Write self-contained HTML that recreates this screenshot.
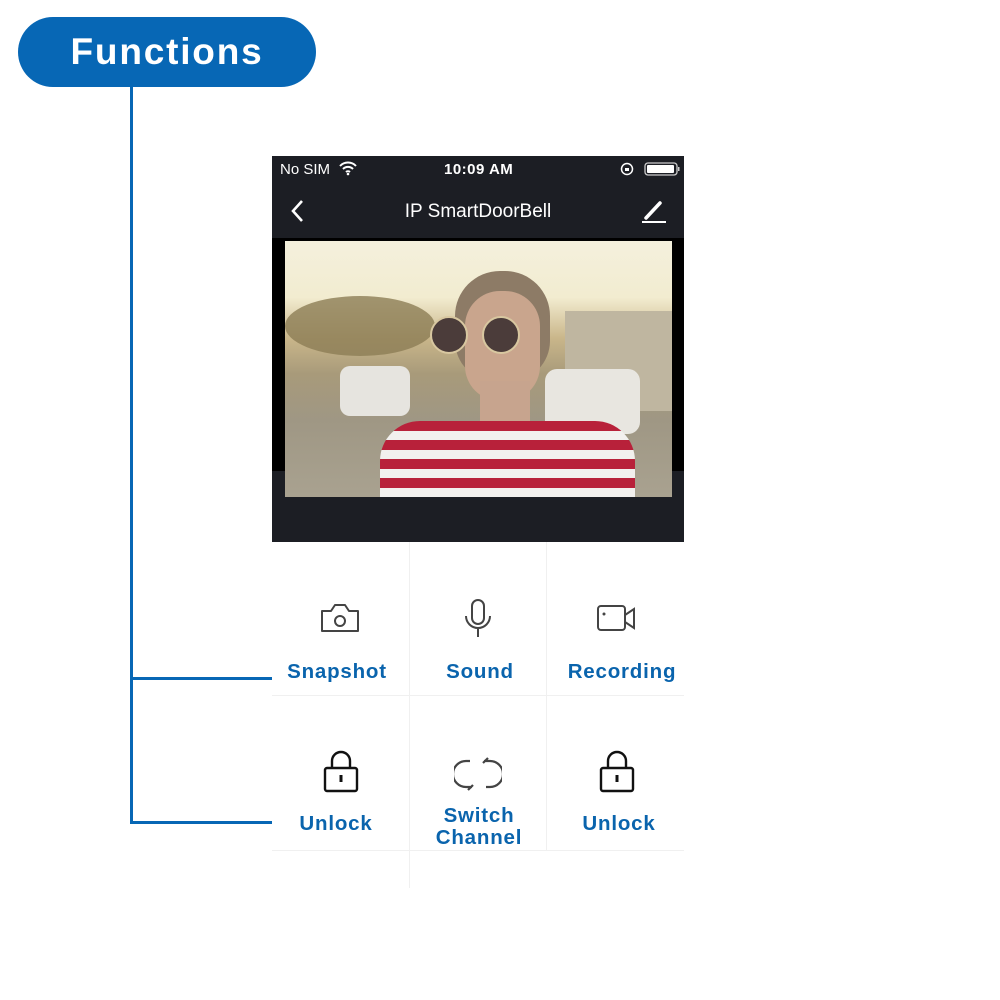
<!DOCTYPE html>
<html><head><meta charset="utf-8"><style>
*{margin:0;padding:0;box-sizing:border-box}
body{width:1000px;height:1000px;background:#fff;position:relative;overflow:hidden;font-family:"Liberation Sans",Arial,sans-serif}
.a{position:absolute}
.pill{left:18px;top:17px;width:298px;height:70px;border-radius:35px;background:#0767b5;color:#fff;font-weight:bold;font-size:37px;text-align:center;line-height:70px;letter-spacing:1.8px}
.ln{background:#0767b5}
.lbl{position:absolute;color:#0a64ad;font-weight:bold;font-size:20.5px;text-align:center;line-height:22px;letter-spacing:0.8px}
.vl{position:absolute;width:1px;background:#f0f0f0}
.hl{position:absolute;height:1px;background:#f0f0f0}
</style></head><body>
<div class="a pill">Functions</div>
<div class="a ln" style="left:130px;top:87px;width:3px;height:737px"></div>
<div class="a ln" style="left:130px;top:677px;width:142px;height:3px"></div>
<div class="a ln" style="left:130px;top:821px;width:142px;height:3px"></div>

<div class="a" style="left:272px;top:156px;width:412px;height:386px;background:#1c1e24"></div>
<div class="a" style="left:280px;top:161px;color:#fff;font-size:15px">No SIM</div>
<svg class="a" style="left:338px;top:160px" width="20" height="16" viewBox="0 0 20 16"><path d="M2 6a11 11 0 0 1 16 0M5 9a7 7 0 0 1 10 0M8 12a3 3 0 0 1 4 0" stroke="#fff" stroke-width="2" fill="none"/><circle cx="10" cy="14" r="1.3" fill="#fff"/></svg>
<div class="a" style="left:444px;top:161px;color:#fff;font-size:15px;font-weight:bold;letter-spacing:0.5px">10:09 AM</div>
<svg class="a" style="left:620px;top:161px" width="60" height="16" viewBox="0 0 60 16"><circle cx="7" cy="8" r="5.5" stroke="#fff" stroke-width="1.5" fill="none"/><rect x="5" y="7" width="4" height="3" fill="#fff"/><rect x="25" y="2" width="32" height="12" rx="3" stroke="#ccc" stroke-width="1.3" fill="none"/><rect x="27" y="4" width="27" height="8" rx="1" fill="#fff"/><rect x="58" y="6" width="1.5" height="4" fill="#ccc"/></svg>
<svg class="a" style="left:290px;top:199px" width="16" height="24" viewBox="0 0 16 24"><path d="M12 2L3 12l9 10" stroke="#fff" stroke-width="2.6" fill="none"/></svg>
<div class="a" style="left:272px;top:201px;width:412px;text-align:center;color:#fff;font-size:19px">IP SmartDoorBell</div>
<svg class="a" style="left:640px;top:199px" width="28" height="26" viewBox="0 0 28 26"><path d="M6 19L20 4" stroke="#fff" stroke-width="3.5" stroke-linecap="round"/><rect x="2" y="22" width="24" height="2" fill="#fff"/></svg>

<div class="a" style="left:272px;top:238px;width:412px;height:233px;background:#000"></div>
<div class="a" style="left:272px;top:471px;width:412px;height:71px;background:#1c1e24"></div>
<div class="a" style="left:285px;top:241px;width:387px;height:256px;overflow:hidden;background:linear-gradient(#f4f0dd 0%,#f2ecd0 22%,#c9b68a 38%,#a89a7a 52%,#9f9784 70%,#a9a290 100%)">
  <div class="a" style="left:0;top:55px;width:150px;height:60px;border-radius:50%;background:#8c7d55;opacity:.8"></div>
  <div class="a" style="left:280px;top:70px;width:107px;height:100px;background:#bfb6a0"></div>
  <div class="a" style="left:55px;top:125px;width:70px;height:50px;border-radius:10px;background:#e6e4df"></div>
  <div class="a" style="left:260px;top:128px;width:95px;height:65px;border-radius:12px;background:#e8e6e0"></div>
  <div class="a" style="left:170px;top:30px;width:95px;height:110px;border-radius:45px 45px 40px 40px;background:#8d7b66"></div>
  <div class="a" style="left:180px;top:50px;width:75px;height:110px;border-radius:35px;background:#c9a58d"></div>
  <div class="a" style="left:145px;top:75px;width:38px;height:38px;border-radius:50%;background:#4b3c3a;border:2px solid #d8c7a0"></div>
  <div class="a" style="left:197px;top:75px;width:38px;height:38px;border-radius:50%;background:#4b3c3a;border:2px solid #d8c7a0"></div>
  <div class="a" style="left:195px;top:140px;width:50px;height:70px;background:#c7a48e"></div>
  <div class="a" style="left:95px;top:180px;width:255px;height:90px;border-radius:40px 40px 0 0;background:repeating-linear-gradient(#b8213a 0 10px,#f2f0ee 10px 19px)"></div>
</div>

<div class="vl" style="left:409px;top:542px;height:346px"></div>
<div class="vl" style="left:546px;top:542px;height:308px"></div>
<div class="hl" style="left:272px;top:695px;width:412px"></div>
<div class="hl" style="left:272px;top:850px;width:412px"></div>

<svg class="a" style="left:318px;top:601px" width="44" height="36" viewBox="0 0 44 36"><path d="M4 10h9l4-6h10l4 6h9v20H4z" stroke="#444" stroke-width="2" fill="none" stroke-linejoin="round"/><circle cx="22" cy="20" r="5" stroke="#444" stroke-width="2" fill="none"/></svg>
<svg class="a" style="left:462px;top:598px" width="32" height="42" viewBox="0 0 32 42"><rect x="10" y="2" width="12" height="24" rx="6" stroke="#444" stroke-width="2" fill="none"/><path d="M4 18a12 12 0 0 0 24 0M16 30v9" stroke="#444" stroke-width="2" fill="none"/></svg>
<svg class="a" style="left:595px;top:603px" width="44" height="32" viewBox="0 0 44 32"><rect x="3" y="3" width="27" height="24" rx="3" stroke="#444" stroke-width="2" fill="none"/><path d="M30 12l9-6v19l-9-6" stroke="#444" stroke-width="2" fill="none"/><circle cx="9" cy="11" r="1.5" fill="#444"/></svg>
<div class="lbl" style="left:272px;top:661px;width:130px">Snapshot</div>
<div class="lbl" style="left:409px;top:661px;width:142px">Sound</div>
<div class="lbl" style="left:546px;top:661px;width:152px">Recording</div>

<svg class="a" style="left:322px;top:750px" width="38" height="44" viewBox="0 0 38 44"><path d="M10 18v-7a9 9 0 0 1 18 0v7" stroke="#111" stroke-width="2.4" fill="none"/><rect x="3" y="18" width="32" height="23" rx="2" stroke="#111" stroke-width="2.4" fill="none"/><rect x="17.5" y="25" width="3" height="7" fill="#111"/></svg>
<svg class="a" style="left:454px;top:756px" width="48" height="36" viewBox="0 0 48 36"><path d="M16 5H12A10 10 0 0 0 12 31h6M14 34l5-5M32 31h4A10 10 0 0 0 36 5h-6M34 2l-5 5" stroke="#444" stroke-width="2.2" fill="none"/></svg>
<svg class="a" style="left:598px;top:750px" width="38" height="44" viewBox="0 0 38 44"><path d="M10 18v-7a9 9 0 0 1 18 0v7" stroke="#111" stroke-width="2.4" fill="none"/><rect x="3" y="18" width="32" height="23" rx="2" stroke="#111" stroke-width="2.4" fill="none"/><rect x="17.5" y="25" width="3" height="7" fill="#111"/></svg>
<div class="lbl" style="left:272px;top:813px;width:128px">Unlock</div>
<div class="lbl" style="left:409px;top:805px;width:140px">Switch<br>Channel</div>
<div class="lbl" style="left:546px;top:813px;width:146px">Unlock</div>
</body></html>
